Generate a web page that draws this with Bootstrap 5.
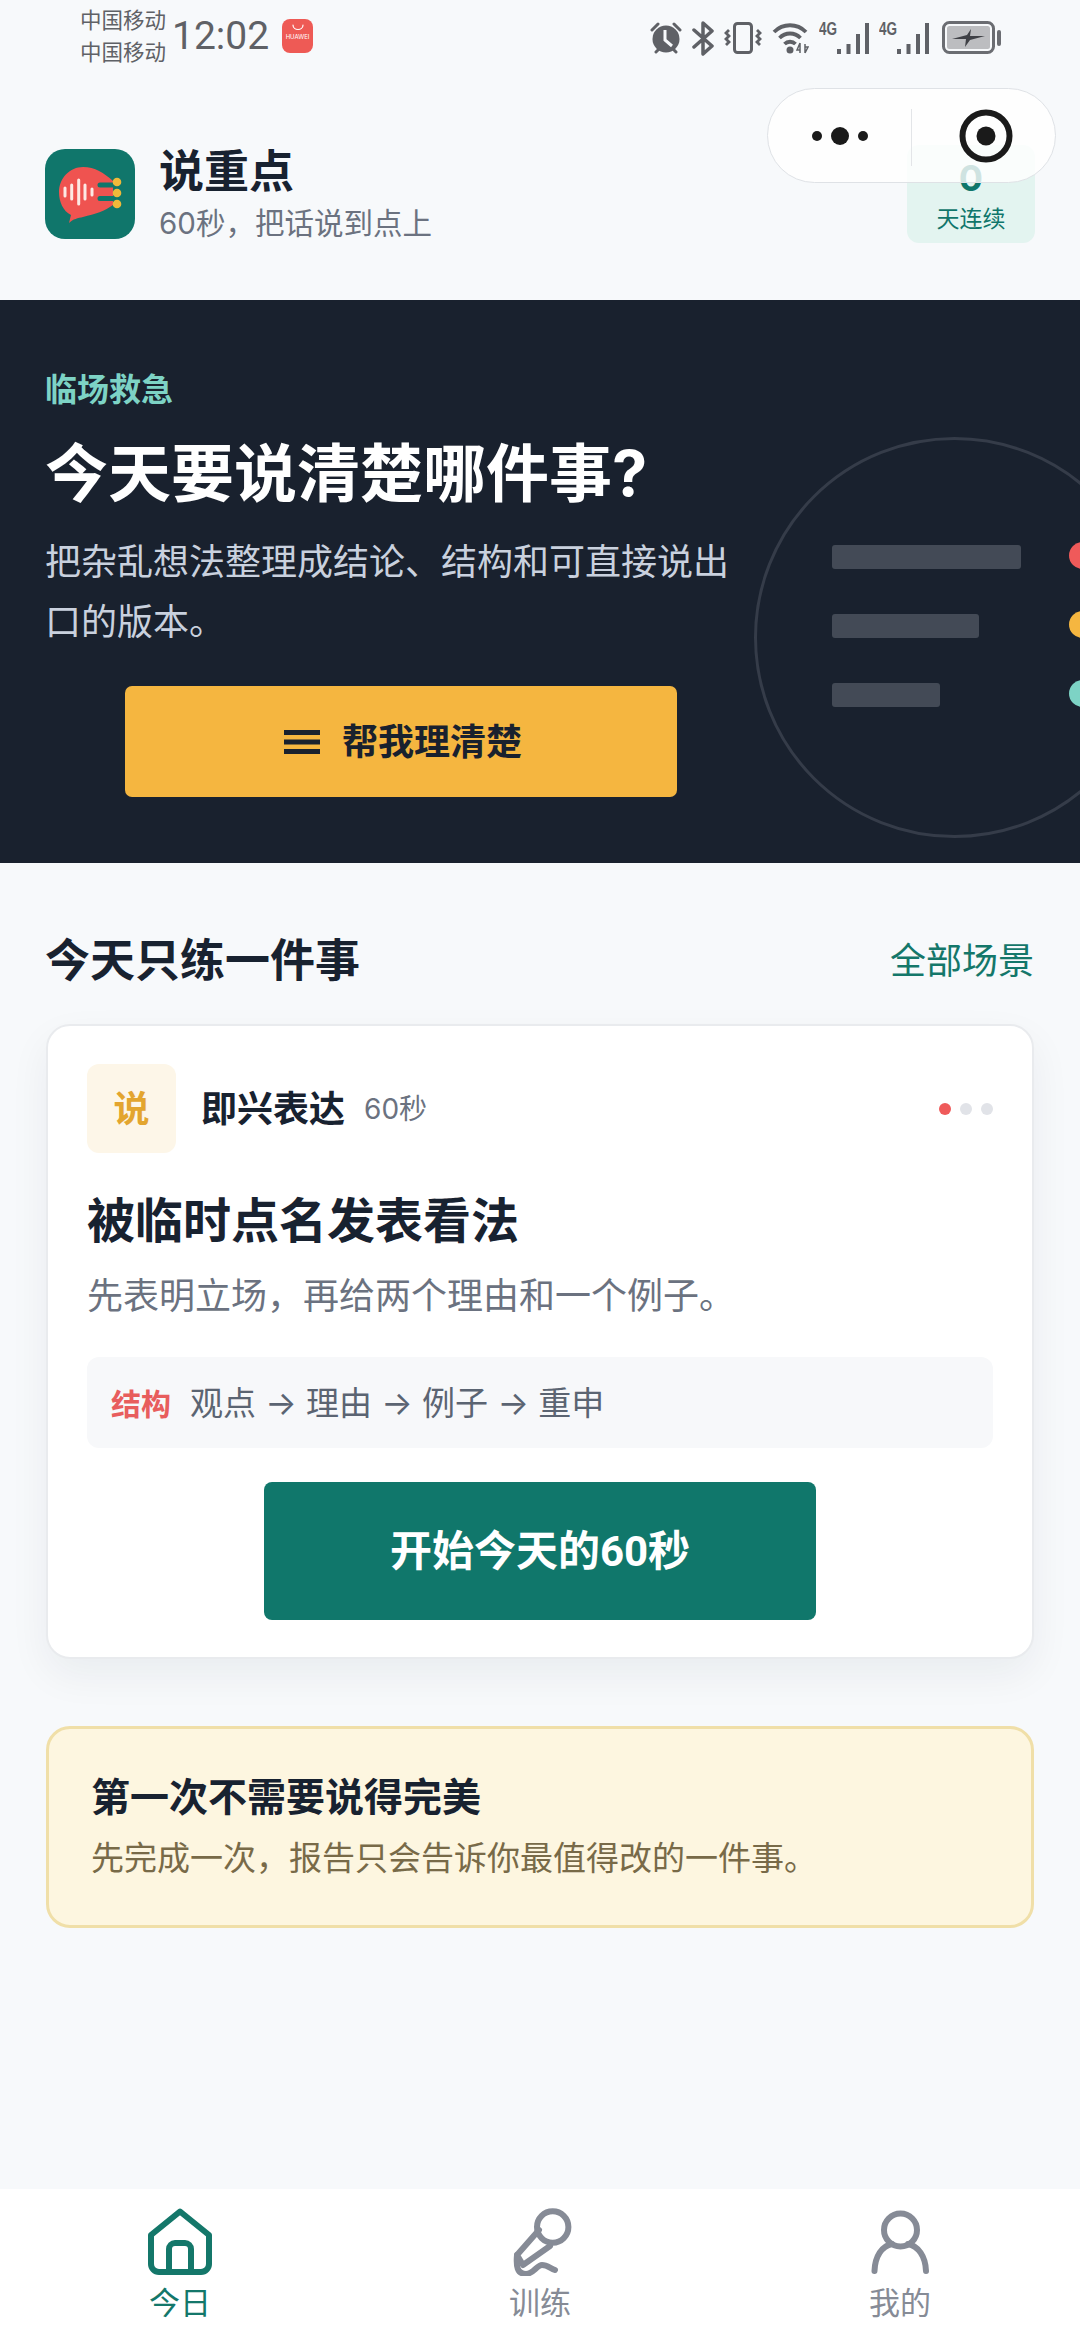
<!DOCTYPE html>
<html lang="zh-CN">
<head>
    <meta charset="UTF-8">
    <meta name="viewport" content="width=device-width, initial-scale=1.0">
    <title>说重点</title>
    <link rel="stylesheet" href="https://cdn.jsdelivr.net/npm/bootstrap@5.3.0/dist/css/bootstrap.min.css">
    <style>
        body { background: #f7f9fb; color: #182230; font-family: Inter, "Noto Sans CJK SC", sans-serif; }
        .app-page { width: 1080px; height: 2340px; position: relative; overflow: hidden; }

        /* status bar */
        .status-row { height: 72px; padding: 4px 79px 0 80px; color: #5f6166; }
        .carrier { font-size: 21.5px; line-height: 32px; }
        .clock { font-family: Roboto, sans-serif; font-size: 39px; line-height: 64px; width: 110px; margin-left: 6px; text-align: left; }
        .store-icon { width: 31px; height: 34px; margin-top: 15px; border-radius: 8px; background: #ee5a55; color: #fff; font-size: 6px; line-height: 8px; }
        .store-icon svg { display: block; margin: 5px auto 2px; }
        .status-icons { gap: 10px; height: 68px; }

        /* capsule */
        .capsule { position: absolute; left: 767px; top: 88px; width: 289px; height: 95px; border: 1px solid #dfe2e6; border-radius: 48px; background: rgba(255, 255, 255, .8); z-index: 5; }
        .capsule-line { position: absolute; left: 143px; top: 20px; height: 57px; border-left: 1px solid #e3e5e8; }
        .capsule-more { position: absolute; left: 38px; top: 33px; }
        .capsule-target { position: absolute; left: 188px; top: 17px; }

        /* header */
        .head-row { height: 228px; padding: 73px 45px 57px; }
        .logo-box { width: 90px; height: 90px; margin-right: 24px; }
        .app-name { font-size: 45px; line-height: 52px; font-weight: 700; color: #182230; }
        .app-sub { font-size: 29.5px; line-height: 40px; color: #6b7280; margin-top: 5px; }
        .streak { width: 128px; height: 98px; padding-top: 15px; background: #e3f4f0; border-radius: 12px; color: #10766b; text-align: center; }
        .streak-num { font-size: 36px; line-height: 36px; font-weight: 700; }
        .streak-label { font-size: 23px; line-height: 30px; margin-top: 8px; }

        /* hero */
        .hero { position: relative; height: 563px; padding: 70px 0 0 45px; background: #19212e; overflow: hidden; }
        .hero-tag { font-size: 32px; line-height: 40px; font-weight: 700; color: #7dd3c5; }
        .hero-title { font-size: 63px; line-height: 76px; font-weight: 700; color: #fff; margin: 25px 0 0; }
        .hero-text { width: 690px; font-size: 36px; line-height: 60px; color: #c9d1de; margin: 21px 0 0; }
        .hero-btn { width: 552px; height: 111px; margin: 34px 0 0 80px; padding-left: 16px; border: 0; border-radius: 7px; background: #f5b640; color: #19212e; font-size: 36px; font-weight: 700; gap: 22px; }
        .hero-btn:hover { background: #f5b640; color: #19212e; }
        .hero-art { position: absolute; left: 754px; top: 137px; width: 401px; height: 401px; border: 3px solid #353c49; border-radius: 50%; }
        .art-bar { position: absolute; left: 75px; height: 24px; border-radius: 3px; background: #434a56; }
        .art-bar-a { top: 105px; width: 189px; }
        .art-bar-b { top: 174px; width: 147px; }
        .art-bar-c { top: 243px; width: 108px; }
        .art-dot { position: absolute; left: 312px; width: 27px; height: 27px; border-radius: 50%; }
        .art-dot-a { top: 102px; background: #ef5a5a; }
        .art-dot-b { top: 171px; background: #f5b640; }
        .art-dot-c { top: 240px; background: #7dd3c5; }

        /* today */
        .today { padding: 68px 46px 0; }
        .today-head { height: 60px; }
        .today-title { font-size: 45px; line-height: 60px; font-weight: 700; margin: 0 0 0 -1px; color: #182230; }
        .today-link { font-size: 36px; line-height: 60px; color: #14776a; text-decoration: none; }
        .task-card { margin-top: 33px; border: 2px solid #e9ebee; border-radius: 24px; box-shadow: 0 16px 40px rgba(24, 34, 48, .06); }
        .task-body { padding: 38px 39px 37px 39px; }
        .say-box { width: 89px; height: 89px; border-radius: 12px; background: #fdf6e8; color: #e3a52f; font-size: 36px; font-weight: 700; }
        .task-kind { font-size: 36px; font-weight: 700; margin-left: 25px; }
        .task-time { font-size: 28px; color: #6b7280; margin-left: 19px; }
        .step-dots { gap: 9px; margin-left: auto; }
        .step-dot { width: 12px; height: 12px; border-radius: 50%; background: #e1e3e8; }
        .step-dot-on { background: #ef5a5a; }
        .task-title { font-size: 48px; line-height: 64px; font-weight: 700; margin: 36px 0 0; color: #182230; }
        .task-text { font-size: 36px; line-height: 50px; color: #6b7280; margin: 18px 0 0; }
        .formula { height: 91px; margin-top: 36px; padding: 3px 0 0 24px; border-radius: 12px; background: #f7f8fa; color: #5b6472; font-size: 33px; }
        .formula-tag { font-size: 30px; font-weight: 700; color: #e85d5d; margin-right: 19px; }
        .start-btn { display: block; width: 552px; height: 138px; margin: 34px auto 0; border: 0; border-radius: 8px; background: #10776b; color: #fff; font-family: Roboto, "Noto Sans CJK SC", sans-serif; font-size: 42px; font-weight: 700; }
        .start-btn:hover { background: #10776b; color: #fff; }
        .tip-box { margin-top: 67px; height: 202px; padding: 43px 42px 0; border: 3px solid #f0dfa8; border-radius: 24px; background: #fdf6e0; }
        .tip-title { font-size: 39px; line-height: 50px; font-weight: 700; margin: 0; color: #182230; }
        .tip-text { font-size: 33px; line-height: 44px; color: #786a48; margin: 14px 0 0; }

        /* tab bar */
        .tab-row { position: absolute; left: 0; right: 0; bottom: 0; height: 151px; margin: 0; background: #fff; }
        .tab-item { padding: 19px 0 0; text-align: center; color: #868b96; font-size: 31px; line-height: 40px; }
        .tab-item svg { display: block; margin: 0 auto 7px; }
        .tab-on { color: #14776a; }
    </style>
</head>
<body>
    <div class="app-page">
        <!-- status bar -->
        <div class="status-row d-flex justify-content-between align-items-start">
            <div class="d-flex">
                <div class="carrier">中国移动<br>中国移动</div>
                <div class="clock">12:02</div>
                <div class="store-icon text-center">
                    <svg width="14" height="7" viewBox="0 0 14 7"><path d="M2 1c0 6 10 6 10 0" fill="none" stroke="#fff" stroke-width="1.2" stroke-linecap="round"/></svg>
                    HUAWEI
                </div>
            </div>
            <div class="status-icons d-flex align-items-center">
                <!-- alarm -->
                <svg width="32" height="34" viewBox="0 0 32 34"><path d="M2 9l6-6M30 9l-6-6M6 31l3-3M26 31l-3-3" stroke="#5f6166" stroke-width="3" stroke-linecap="round"/><circle cx="16" cy="18" r="13.5" fill="#5f6166"/><path d="M15 9v10l7 6" fill="none" stroke="#f7f9fb" stroke-width="3"/></svg>
                <!-- bluetooth -->
                <svg width="22" height="35" viewBox="0 0 22 35"><path d="M2 9l18 16-9 8V2l9 8L2 26" fill="none" stroke="#5f6166" stroke-width="3.500" stroke-linejoin="round" stroke-linecap="round"/></svg>
                <!-- vibrate -->
                <svg width="38" height="32" viewBox="0 0 38 32"><rect x="10.500" y="1.500" width="17" height="29" rx="3" fill="none" stroke="#5f6166" stroke-width="3"/><path d="M5 8L2 11l3 3-3 3 3 3-3 3M33 8l3 3-3 3 3 3-3 3 3 3" fill="none" stroke="#5f6166" stroke-width="2.800"/></svg>
                <!-- wifi -->
                <svg width="37" height="32" viewBox="0 0 37 32"><path d="M2 10c9-9 23-9 32 0M7.500 16c6-6 15-6 21 0M12.500 22c3-3 8-3 11 0" fill="none" stroke="#5f6166" stroke-width="3.800"/><circle cx="18" cy="28" r="3.500" fill="#5f6166"/><path d="M28 21v10M33 22v9M28 21l-3 7h3M33 31l3-6h-3" fill="none" stroke="#5f6166" stroke-width="1.500"/></svg>
                <!-- signal -->
                <svg width="50" height="42" viewBox="0 -4 50 42"><text x="0" y="14" font-family="Liberation Sans" font-size="18" font-weight="700" fill="#5f6166" textLength="18" lengthAdjust="spacingAndGlyphs">4G</text><path d="M18 28h4v5h-4zM27.500 23h4v10h-4zM37 13h4v20h-4zM46 2h4v31h-4z" fill="#5f6166"/></svg>
                <svg width="50" height="42" viewBox="0 -4 50 42"><text x="0" y="14" font-family="Liberation Sans" font-size="18" font-weight="700" fill="#5f6166" textLength="18" lengthAdjust="spacingAndGlyphs">4G</text><path d="M18 28h4v5h-4zM27.500 23h4v10h-4zM37 13h4v20h-4zM46 2h4v31h-4z" fill="#5f6166"/></svg>
                <!-- battery -->
                <svg width="62" height="34" viewBox="0 0 62 34"><rect x="4.500" y="1.500" width="50" height="30" rx="6" fill="none" stroke="#6b6d72" stroke-width="3"/><rect x="8" y="5" width="43" height="23" rx="2.500" fill="#bcbdc0"/><path d="M13 18l15-4 4-6-1 7 15 0-15 4-5 7 1-8z" fill="#3f4146"/><rect x="58" y="9" width="4" height="16" rx="2" fill="#6b6d72"/></svg>
            </div>
        </div>

        <!-- mini program capsule -->
        <div class="capsule">
            <svg class="capsule-more" width="66" height="28" viewBox="0 0 66 28"><circle cx="11" cy="14" r="5" fill="#1a1a1a"/><circle cx="34" cy="14" r="9" fill="#1a1a1a"/><circle cx="57" cy="14" r="5" fill="#1a1a1a"/></svg>
            <div class="capsule-line"></div>
            <svg class="capsule-target" width="60" height="60" viewBox="0 0 60 60"><circle cx="30" cy="30" r="23.500" fill="none" stroke="#1a1a1a" stroke-width="6"/><circle cx="30" cy="30" r="9.500" fill="#1a1a1a"/></svg>
        </div>

        <!-- header -->
        <div class="head-row d-flex align-items-center">
            <svg class="logo-box flex-shrink-0" viewBox="0 0 90 90">
                <rect width="90" height="90" rx="20" fill="#10766b"/>
                <path d="M14 43C14 29 25 18 38 18c12 0 21 6 30 14v24c-8 6-18 9-30 12-5 1-10 2-14 6l2-8C18 62 14 53 14 43z" fill="#ef5350"/>
                <path d="M55 36h16M55 49.500h16" stroke="#10766b" stroke-width="5" stroke-linecap="round"/>
                <path d="M20 39v8M26.700 36v14M33.700 31v24M40 36v14M47 40v6" stroke="#fde8e4" stroke-width="3" stroke-linecap="round"/>
                <circle cx="72" cy="33" r="4.300" fill="#f0b93a"/><circle cx="72" cy="44" r="4.300" fill="#f0b93a"/><circle cx="72" cy="55" r="4.300" fill="#f0b93a"/>
            </svg>
            <div class="flex-grow-1">
                <div class="app-name">说重点</div>
                <div class="app-sub">60秒，把话说到点上</div>
            </div>
            <div class="streak">
                <div class="streak-num">0</div>
                <div class="streak-label">天连续</div>
            </div>
        </div>

        <!-- hero -->
        <section class="hero">
            <div class="hero-tag">临场救急</div>
            <h1 class="hero-title">今天要说清楚哪件事?</h1>
            <p class="hero-text">把杂乱想法整理成结论、结构和可直接说出口的版本。</p>
            <button class="btn hero-btn d-flex align-items-center justify-content-center" type="button">
                <svg width="36" height="24" viewBox="0 0 36 24"><path d="M0 0h36v5H0zM0 9.500h36v5H0zM0 19h36v5H0z" fill="#19212e"/></svg>
                帮我理清楚
            </button>
            <div class="hero-art">
                <div class="art-bar art-bar-a"></div>
                <div class="art-bar art-bar-b"></div>
                <div class="art-bar art-bar-c"></div>
                <div class="art-dot art-dot-a"></div>
                <div class="art-dot art-dot-b"></div>
                <div class="art-dot art-dot-c"></div>
            </div>
        </section>

        <!-- today -->
        <section class="today">
            <div class="today-head d-flex justify-content-between align-items-center">
                <h2 class="today-title">今天只练一件事</h2>
                <a class="today-link" href="#">全部场景</a>
            </div>
            <div class="card task-card">
                <div class="card-body task-body">
                    <div class="d-flex align-items-center">
                        <div class="say-box d-flex align-items-center justify-content-center">说</div>
                        <div class="task-kind">即兴表达</div>
                        <div class="task-time">60秒</div>
                        <div class="step-dots d-flex">
                            <span class="step-dot step-dot-on"></span>
                            <span class="step-dot"></span>
                            <span class="step-dot"></span>
                        </div>
                    </div>
                    <h3 class="task-title">被临时点名发表看法</h3>
                    <p class="task-text">先表明立场，再给两个理由和一个例子。</p>
                    <div class="formula d-flex align-items-center">
                        <span class="formula-tag">结构</span>
                        <span>观点 → 理由 → 例子 → 重申</span>
                    </div>
                    <button class="btn start-btn" type="button">开始今天的60秒</button>
                </div>
            </div>
            <div class="tip-box">
                <h4 class="tip-title">第一次不需要说得完美</h4>
                <p class="tip-text">先完成一次，报告只会告诉你最值得改的一件事。</p>
            </div>
        </section>

        <!-- tab bar -->
        <nav class="row tab-row g-0">
            <div class="col-4 tab-item tab-on">
                <svg width="64" height="68" viewBox="0 0 64 68" fill="none" stroke="#14776a" stroke-width="6" stroke-linejoin="round"><path d="M32 3.500L61 27v29a8 8 0 0 1-8 8H11a8 8 0 0 1-8-8V27z"/><path d="M21 64V41a6 6 0 0 1 6-6h10a6 6 0 0 1 6 6v23"/></svg>
                今日
            </div>
            <div class="col-4 tab-item">
                <svg width="64" height="68" viewBox="0 0 64 68" fill="none" stroke="#868b96" stroke-width="6" stroke-linecap="round" stroke-linejoin="round"><circle cx="44.700" cy="19" r="15.700"/><path d="M31 22L9 47l6 10 27-19"/><path d="M9 47c-1 11 0 19 9 19 7 0 11-9 16-9 5 0 8 3 13 5"/></svg>
                训练
            </div>
            <div class="col-4 tab-item">
                <svg width="64" height="68" viewBox="0 0 64 68" fill="none" stroke="#868b96" stroke-width="6" stroke-linecap="round"><circle cx="32.500" cy="22" r="16.500"/><path d="M6.500 63C7 48 14 38 24 36M58 63C57.500 48 50 38 40 36"/></svg>
                我的
            </div>
        </nav>
    </div>
    <script src="https://cdn.jsdelivr.net/npm/bootstrap@5.3.0/dist/js/bootstrap.bundle.min.js"></script>
</body>
</html>
